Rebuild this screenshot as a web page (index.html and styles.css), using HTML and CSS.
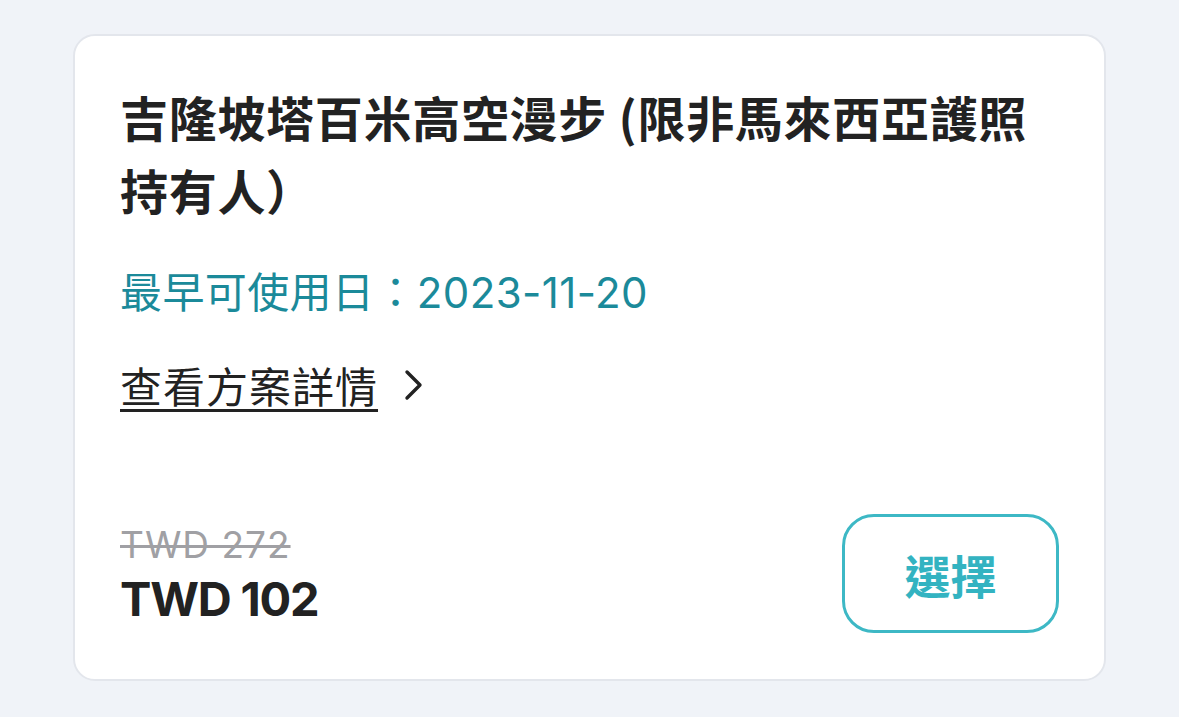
FILE: index.html
```html
<!DOCTYPE html>
<html lang="zh-Hant">
<head>
<meta charset="utf-8">
<link rel="stylesheet" href="styles.css">
</head>
<body>
<div class="page">
  <div class="card">
    <h1 class="title">吉隆坡塔百米高空漫步 (限非馬來西亞護照持有人）</h1>
    <div class="date">最早可使用日：2023-11-20</div>
    <a class="details">
      <span class="details-text">查看方案詳情</span>
      <svg class="chev" width="22" height="34" viewBox="0 0 22 34"><path d="M5 4 L18 17 L5 30" fill="none" stroke="#222" stroke-width="3.4" stroke-linecap="round" stroke-linejoin="round"/></svg>
    </a>
    <div class="bottom">
      <div class="prices">
        <div class="old">TWD 272</div>
        <div class="new">TWD 102</div>
      </div>
      <button class="select">選擇</button>
    </div>
  </div>
</div>
</body>
</html>
```

FILE: styles.css
```css
html, body {
  margin: 0;
  padding: 0;
  background: #f0f3f8;
}
.page {
  padding: 34px 0 0 73px;
}
.card {
  box-sizing: border-box;
  width: 1033px;
  height: 647px;
  background: #ffffff;
  border: 2px solid #e3e6ec;
  border-radius: 22px;
  padding: 44px 45px 46px 45px;
  display: flex;
  flex-direction: column;
  font-family: "Noto Sans CJK TC", sans-serif;
}
.title {
  margin: 0;
  font-size: 48px;
  line-height: 73px;
  font-weight: 700;
  letter-spacing: 0.7px;
  color: #222222;
}
.date {
  margin-top: 40px;
  font-family: Inter, "Noto Sans CJK TC", sans-serif;
  font-size: 42px;
  line-height: 54px;
  letter-spacing: 0.4px;
  color: #1b8a9a;
}
.details {
  margin-top: 38px;
  display: flex;
  align-items: center;
  gap: 24px;
  color: #222222;
  font-size: 42px;
  line-height: 54px;
}
.details-text {
  letter-spacing: 1px;
  text-decoration: underline;
  text-decoration-thickness: 3px;
  text-underline-offset: 6px;
}
.chev {
  display: block;
}
.bottom {
  margin-top: auto;
  display: flex;
  justify-content: space-between;
  align-items: center;
}
.prices {
  font-family: Inter, "Liberation Sans", Arial, sans-serif;
  padding-top: 2px;
}
.old {
  font-size: 37px;
  line-height: 48px;
  letter-spacing: 1px;
  font-weight: 400;
  color: #a0a0a4;
  text-decoration: line-through;
  text-decoration-thickness: 3px;
}
.new {
  font-size: 47px;
  line-height: 60px;
  font-weight: 700;
  letter-spacing: -1.2px;
  color: #222222;
}
.select {
  box-sizing: border-box;
  width: 217px;
  height: 119px;
  background: #ffffff;
  border: 3px solid #3db8c5;
  border-radius: 32px;
  color: #33b3c1;
  font-family: "Noto Sans CJK TC", sans-serif;
  font-size: 46px;
  font-weight: 700;
  padding: 0;
}
```
